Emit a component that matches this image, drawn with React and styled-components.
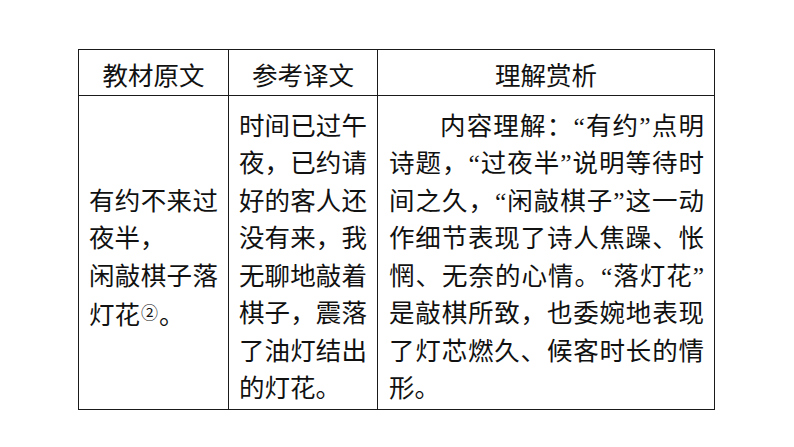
import React from "react";
import styled, { createGlobalStyle } from "styled-components";

const Global = createGlobalStyle`
  html, body { margin: 0; padding: 0; background: #fff; }
  body { font-family: "Liberation Serif", "Noto Sans CJK SC", serif; color: #111; }
`;

const Page = styled.div`
  width: 794px;
  height: 447px;
  padding: 49px 0 0 78px;
  box-sizing: border-box;
  background: #fff;
`;

const Table = styled.table`
  border-collapse: collapse;
  width: 636px;
  table-layout: fixed;
  font-size: 25.5px;
`;

const HeadCell = styled.th`
  border: 1px solid #1a1a1a;
  height: 45px;
  padding: 9px 0 0 0;
  box-sizing: border-box;
  font-weight: 400;
  text-align: center;
  line-height: 36px;
  white-space: nowrap;
`;

const Cell = styled.td`
  border: 1px solid #1a1a1a;
  height: 314px;
  box-sizing: border-box;
  padding: 10px ${(p) => p.$padR || 10}px 0 ${(p) => p.$padL || 10}px;
  vertical-align: middle;
`;

const Line = styled.div`
  height: 37.5px;
  line-height: 37.5px;
  white-space: nowrap;
  text-align: ${(p) => (p.$fill ? "justify" : "left")};
  text-align-last: ${(p) => (p.$fill ? "justify" : "left")};
  text-indent: ${(p) => (p.$indent ? "2em" : "0")};
`;

const NoteMark = styled.span`
  font-size: 17px;
  vertical-align: 5px;
  margin: 0 1px;
`;

const col1 = [
  ["有约不来过", true],
  ["夜半，", false],
  ["闲敲棋子落", true],
  [
    <>
      灯花<NoteMark>②</NoteMark>。
    </>,
    false,
  ],
];

const col2 = [
  ["时间已过午", true],
  ["夜，已约请", true],
  ["好的客人还", true],
  ["没有来，我", true],
  ["无聊地敲着", true],
  ["棋子，震落", true],
  ["了油灯结出", true],
  ["的灯花。", false],
];

const col3 = [
  ["内容理解：“有约”点明", true, true],
  ["诗题，“过夜半”说明等待时", true],
  ["间之久，“闲敲棋子”这一动", true],
  ["作细节表现了诗人焦躁、怅", true],
  ["惘、无奈的心情。“落灯花”", true],
  ["是敲棋所致，也委婉地表现", true],
  ["了灯芯燃久、候客时长的情", true],
  ["形。", false],
];

const Lines = ({ items }) =>
  items.map(([t, f, i], k) => (
    <Line key={k} $fill={f} $indent={i}>
      {t}
    </Line>
  ));

export default function App() {
  return (
    <>
      <Global />
      <Page>
        <Table>
          <colgroup>
            <col style={{ width: 150 }} />
            <col style={{ width: 149 }} />
            <col style={{ width: 337 }} />
          </colgroup>
          <thead>
            <tr>
              <HeadCell>教材原文</HeadCell>
              <HeadCell>参考译文</HeadCell>
              <HeadCell>理解赏析</HeadCell>
            </tr>
          </thead>
          <tbody>
            <tr>
              <Cell>
                <Lines items={col1} />
              </Cell>
              <Cell>
                <Lines items={col2} />
              </Cell>
              <Cell $padL={11} $padR={10}>
                <Lines items={col3} />
              </Cell>
            </tr>
          </tbody>
        </Table>
      </Page>
    </>
  );
}
